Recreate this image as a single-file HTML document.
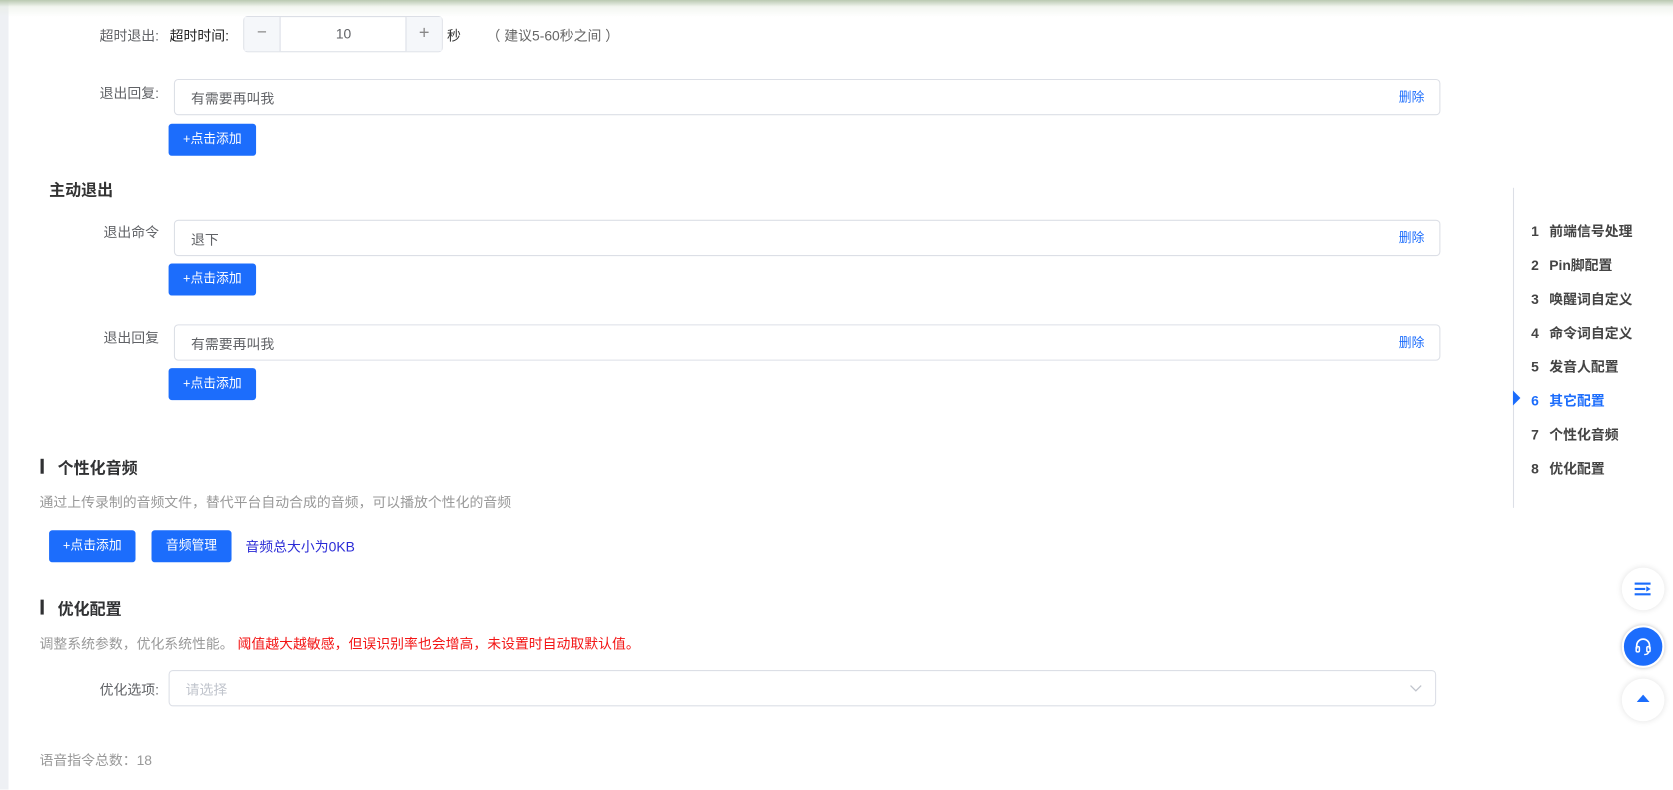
<!DOCTYPE html>
<html><head><meta charset="utf-8"><style>
*{margin:0;padding:0;box-sizing:border-box}
body{width:1673px;height:789px;position:relative;background:#fff;font-family:"Liberation Sans","Noto Sans CJK SC",sans-serif;font-size:13px;color:#606266;overflow:hidden}
#w{position:absolute;left:0;top:0;width:1568px;height:740px;transform:scale(1.06696);transform-origin:0 0}
.a{position:absolute;white-space:nowrap}
.lbl{position:absolute;text-align:right;width:120px;left:29px;font-size:13px;color:#606266}
.inp{position:absolute;left:163px;width:1187px;height:34px;border:1px solid #dcdfe6;border-radius:4px;background:#fff}
.inp span{position:absolute;left:15px;top:7px;font-size:13px;color:#606266}
.inp b{position:absolute;right:14px;top:7px;font-weight:normal;color:#1c6dfc;font-size:12px}
.btn{position:absolute;height:30px;background:#1c6dfc;border-radius:3px;color:#fff;font-size:12px;text-align:center;line-height:29px}
.h{position:absolute;left:38px;font-size:15px;font-weight:bold;color:#303133}
.h i{position:absolute;left:0;top:2px;width:3px;height:14px;background:#303133}
.h span{margin-left:16px}
.nav{position:absolute;left:1435px;font-size:13px;font-weight:bold;color:#444}
.nav em{font-style:normal;display:inline-block;width:17px}
.fb{position:absolute;left:1520px;width:40px;height:40px;border-radius:50%;background:#fff;box-shadow:0 0 6px rgba(0,0,0,.12)}
</style></head><body>
<div id="w">
<div class="a" style="left:0;top:0;width:8px;height:740px;background:#eef0f4"></div>
<div class="a" style="left:0;top:0;width:1568px;height:16px;background:linear-gradient(#b9c8b0,rgba(230,236,226,.5) 40%,rgba(255,255,255,0))"></div>

<div class="lbl" style="top:23px">超时退出:</div>
<div class="a" style="left:159px;top:23px;color:#222">超时时间:</div>
<div class="a" style="left:228px;top:15px;width:187px;height:34px;border:1px solid #dcdfe6;border-radius:4px;background:#fff">
 <div class="a" style="left:0;top:0;width:34px;height:32px;background:#f5f7fa;border-right:1px solid #dcdfe6;text-align:center;line-height:30px;font-size:16px;color:#888;font-weight:300">−</div>
 <div class="a" style="left:34px;top:8px;width:118px;text-align:center;color:#606266">10</div>
 <div class="a" style="right:0;top:0;width:34px;height:32px;background:#f5f7fa;border-left:1px solid #dcdfe6;text-align:center;line-height:30px;font-size:17px;color:#888;font-weight:300">+</div>
</div>
<div class="a" style="left:419px;top:23px;color:#333">秒</div>
<div class="a" style="left:456px;top:23px;color:#666">（ 建议5-60秒之间 ）</div>

<div class="lbl" style="top:77px">退出回复:</div>
<div class="inp" style="top:74px"><span>有需要再叫我</span><b>删除</b></div>
<div class="btn" style="left:158px;top:116px;width:82px">+点击添加</div>

<div class="a" style="left:46px;top:167px;font-size:15px;font-weight:bold;color:#333">主动退出</div>

<div class="lbl" style="top:207px">退出命令</div>
<div class="inp" style="top:206px"><span>退下</span><b>删除</b></div>
<div class="btn" style="left:158px;top:247px;width:82px">+点击添加</div>

<div class="lbl" style="top:306px">退出回复</div>
<div class="inp" style="top:304px"><span>有需要再叫我</span><b>删除</b></div>
<div class="btn" style="left:158px;top:345px;width:82px">+点击添加</div>

<div class="h" style="top:428px"><i></i><span>个性化音频</span></div>
<div class="a" style="left:37px;top:460px;font-size:13px;color:#999">通过上传录制的音频文件，替代平台自动合成的音频，可以播放个性化的音频</div>
<div class="btn" style="left:46px;top:497px;width:81px">+点击添加</div>
<div class="btn" style="left:142px;top:497px;width:75px">音频管理</div>
<div class="a" style="left:230px;top:502px;color:#2b2bd6">音频总大小为0KB</div>

<div class="h" style="top:560px"><i></i><span>优化配置</span></div>
<div class="a" style="left:37px;top:593px;font-size:13px;color:#999">调整系统参数，优化系统性能。 <span style="color:#f31515">阈值越大越敏感，但误识别率也会增高，未设置时自动取默认值。</span></div>

<div class="lbl" style="top:636px">优化选项:</div>
<div class="a" style="left:158px;top:628px;width:1188px;height:34px;border:1px solid #dcdfe6;border-radius:4px">
 <span class="a" style="left:15px;top:7px;color:#c0c4cc">请选择</span>
 <svg class="a" style="right:12px;top:12px" width="12" height="8" viewBox="0 0 12 8"><path d="M1 1.5l5 5 5-5" fill="none" stroke="#c0c4cc" stroke-width="1.2"/></svg>
</div>

<div class="a" style="left:37px;top:702px;color:#999">语音指令总数：18</div>

<div class="a" style="left:1418px;top:176px;width:1px;height:300px;background:#dcdfe6"></div>
<div class="a" style="left:1418px;top:366px;width:0;height:0;border-top:7px solid transparent;border-bottom:7px solid transparent;border-left:7px solid #1c6dfc"></div>
<div class="nav" style="top:206px"><em>1</em>前端信号处理</div>
<div class="nav" style="top:238px"><em>2</em>Pin脚配置</div>
<div class="nav" style="top:270px"><em>3</em>唤醒词自定义</div>
<div class="nav" style="top:302px"><em>4</em>命令词自定义</div>
<div class="nav" style="top:333px"><em>5</em>发音人配置</div>
<div class="nav" style="top:365px;color:#1c6dfc"><em>6</em>其它配置</div>
<div class="nav" style="top:397px"><em>7</em>个性化音频</div>
<div class="nav" style="top:429px"><em>8</em>优化配置</div>

<div class="fb" style="top:532px"><svg class="a" style="left:12px;top:13px" width="16" height="14" viewBox="0 0 16 14"><rect x="0" y="1" width="15" height="2" fill="#1c6dfc"/><rect x="0" y="6" width="10" height="2" fill="#1c6dfc"/><rect x="0" y="11" width="15" height="2" fill="#1c6dfc"/><path d="M11 4.5l4 2.5-4 2.5z" fill="#1c6dfc"/></svg></div>
<div class="fb" style="top:586px;background:#1c6dfc;border:2px solid #fff;box-shadow:0 0 4px rgba(0,0,0,.25)"><svg class="a" style="left:9px;top:9px" width="18" height="18" viewBox="0 0 18 18"><path d="M3 11V8a6 6 0 0 1 12 0v3" fill="none" stroke="#fff" stroke-width="1.6"/><rect x="2.5" y="9" width="3" height="5" rx="1.2" fill="none" stroke="#fff" stroke-width="1.4"/><rect x="12.5" y="9" width="3" height="5" rx="1.2" fill="none" stroke="#fff" stroke-width="1.4"/><path d="M14 14q0 2.5-4 2.5" fill="none" stroke="#fff" stroke-width="1.3"/></svg></div>
<div class="fb" style="top:636px"><svg class="a" style="left:14px;top:15px" width="12" height="8" viewBox="0 0 12 8"><path d="M6 0l6 7H0z" fill="#1c6dfc"/></svg></div>
</div>
</body></html>
